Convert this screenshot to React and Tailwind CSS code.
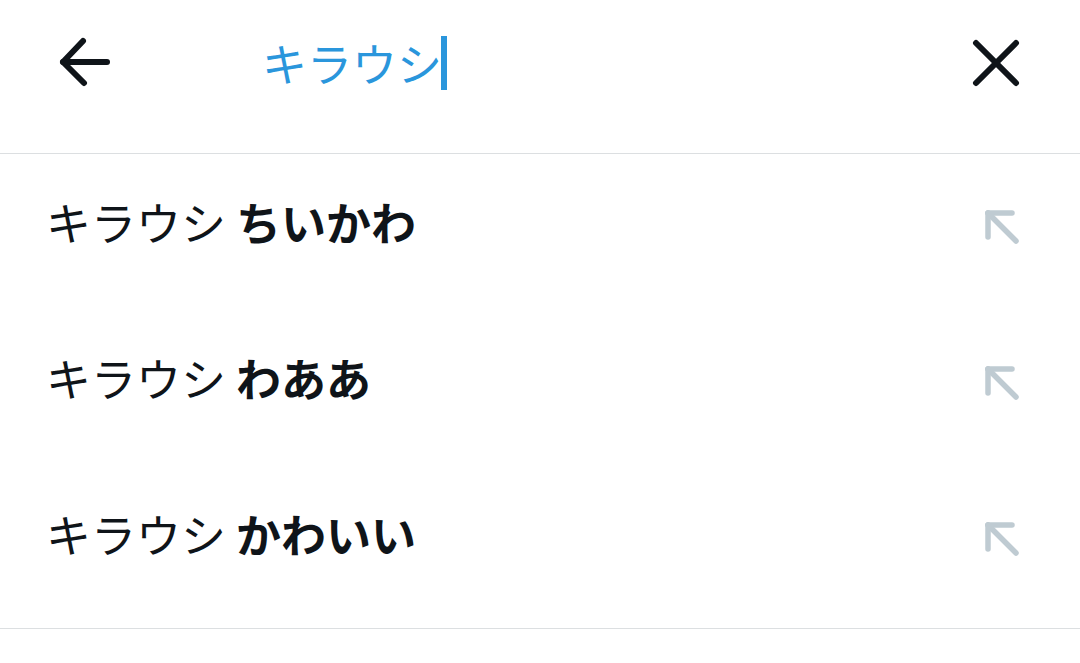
import React from "react";

const font = { fontFamily: '"Noto Sans CJK JP", "Noto Sans", sans-serif' };

const suggestions = ["ちいかわ", "わああ", "かわいい"];

const ArrowUpLeft = () => (
  <svg width="40" height="40" viewBox="0 0 40 40" fill="none" stroke="#bfcbd2" strokeWidth="5.5" strokeLinecap="round" strokeLinejoin="round">
    <path d="M6 6h24" />
    <path d="M6 6v24" />
    <path d="M6 6l28 28" />
  </svg>
);

const App = () => {
  return (
    <div className="w-[1080px] h-[663px] bg-white overflow-hidden" style={font}>
      {/* header */}
      <div className="h-[154px] pb-[28px] flex items-center border-b border-[#dcdfe1]">
        <div className="w-[262px] pl-[58px] flex items-center">
          <svg width="52" height="52" viewBox="0 0 52 52" fill="none" stroke="#0f1419" strokeWidth="6" strokeLinecap="round" strokeLinejoin="round">
            <path d="M5 25h44" />
            <path d="M25 4L5 25l21 21" />
          </svg>
        </div>
        <div className="flex-1 flex items-center">
          <span className="text-[45px] leading-none text-[#2a96dc]">キラウシ</span>
          <span className="w-[6px] h-[54px] bg-[#2a96dc] ml-[-1px]" />
        </div>
        <div className="pr-[60px] flex items-center">
          <svg width="48" height="48" viewBox="0 0 48 48" fill="none" stroke="#0f1419" strokeWidth="6" strokeLinecap="round">
            <path d="M4 4l40 40" />
            <path d="M44 4L4 44" />
          </svg>
        </div>
      </div>

      {/* suggestions */}
      <div className="pb-[6px] border-b border-[#dcdfe1]">
        {suggestions.map((s) => (
          <div key={s} className="h-[156px] pb-[22px] pl-[46px] pr-[58px] flex items-center justify-between">
            <div className="text-[45px] leading-none text-[#0f1419]">
              キラウシ <span className="font-bold">{s}</span>
            </div>
            <div className="pt-[12px]">
              <ArrowUpLeft />
            </div>
          </div>
        ))}
      </div>
    </div>
  );
};

export default App;
